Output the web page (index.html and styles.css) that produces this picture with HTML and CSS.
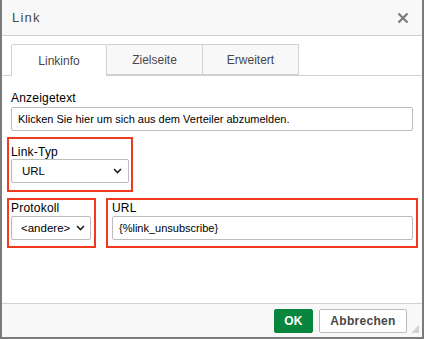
FILE: index.html
```html
<!DOCTYPE html>
<html>
<head>
<meta charset="utf-8">
<link rel="stylesheet" href="styles.css">
</head>
<body>
<div class="dlg">
  <div class="titlebar">
    <span class="title">Link</span>
    <svg class="close" width="12" height="12" viewBox="0 0 12 12"><path d="M1.5 1.5L10.5 10.5M10.5 1.5L1.5 10.5" stroke="#7a7a7a" stroke-width="2.2" stroke-linecap="butt"/></svg>
  </div>
  <div class="main">
    <div class="tabs">
      <div class="tab active">Linkinfo</div>
      <div class="tab">Zielseite</div>
      <div class="tab">Erweitert</div>
    </div>
    <div class="content">
      <div class="plain">
        <div class="lbl">Anzeigetext</div>
        <div class="input wide">Klicken Sie hier um sich aus dem Verteiler abzumelden.</div>
      </div>
      <div class="box box-typ">
        <div class="lbl">Link-Typ</div>
        <div class="select sel-typ"><span>URL</span><svg width="9" height="6" viewBox="0 0 9 6"><path d="M1 1L4.5 4.5L8 1" fill="none" stroke="#222" stroke-width="1.6"/></svg></div>
      </div>
      <div class="row">
        <div class="box box-prot">
          <div class="lbl">Protokoll</div>
          <div class="select sel-prot"><span>&lt;andere&gt;</span><svg width="9" height="6" viewBox="0 0 9 6"><path d="M1 1L4.5 4.5L8 1" fill="none" stroke="#222" stroke-width="1.6"/></svg></div>
        </div>
        <div class="box box-url">
          <div class="lbl">URL</div>
          <div class="input">{%link_unsubscribe}</div>
        </div>
      </div>
    </div>
  </div>
  <div class="footer">
    <div class="btn ok">OK</div>
    <div class="btn cancel">Abbrechen</div>
    <svg class="grip" width="8" height="8" viewBox="0 0 8 8"><path d="M8 0L8 8L0 8Z" fill="#d4d4d4"/></svg>
  </div>
</div>
</body>
</html>
```
FILE: styles.css
```css
html, body {
  margin: 0;
  padding: 0;
}
body {
  background: #7b7b7b;
  width: 424px;
  height: 339px;
  font-family: "Liberation Sans", Arial, sans-serif;
  font-size: 12px;
  color: #000;
}
.dlg {
  margin-left: 2px;
  width: 420px;
  height: 337px;
  background: #fff;
  display: flex;
  flex-direction: column;
}
.titlebar {
  height: 35px;
  background: #f8f8f8;
  border-bottom: 1px solid #d1d1d1;
  display: flex;
  align-items: center;
  justify-content: space-between;
  padding: 0 13px 0 10px;
}
.title {
  font-size: 13px;
  color: #484848;
  letter-spacing: 1.2px;
}
.close {
  display: block;
}
.main {
  flex: 1;
  padding: 8px 0 0 0;
}
.tabs {
  display: flex;
  padding-left: 9px;
  border-bottom: 1px solid #d1d1d1;
  height: 31px;
}
.tab {
  width: 96px;
  height: 31px;
  box-sizing: border-box;
  border: 1px solid #d1d1d1;
  border-left: none;
  background: #f8f8f8;
  color: #484848;
  display: flex;
  align-items: center;
  justify-content: center;
  padding-top: 1px;
}
.tab.active {
  border-left: 1px solid #d1d1d1;
  background: #fff;
  height: 32px;
  border-bottom: none;
  border-radius: 2px 2px 0 0;
}
.content {
  padding: 0 4px 0 5px;
}
.lbl {
  color: #000;
  line-height: 14px;
  height: 14px;
  letter-spacing: 0.2px;
}
.plain {
  padding: 15px 0 0 4px;
}
.plain .lbl {
  margin-bottom: 2px;
}
.input {
  height: 24px;
  box-sizing: border-box;
  border: 1px solid #bcbcbc;
  border-radius: 2px;
  padding: 0 6px;
  line-height: 22px;
  color: #000;
  white-space: nowrap;
  font-size: 11px;
}
.input.wide {
  width: 402px;
}
.box {
  border: 2px solid #ee3a1f;
  box-sizing: border-box;
}
.box-typ {
  margin-top: 6px;
  width: 126px;
  padding: 6px 2px 7px 2px;
}
.box-typ .lbl {
  margin-bottom: 0;
}
.select {
  height: 24px;
  box-sizing: border-box;
  border: 1px solid #bcbcbc;
  border-radius: 2px;
  display: flex;
  align-items: center;
  justify-content: space-between;
  color: #000;
  font-size: 11.5px;
}
.sel-typ {
  padding: 0 6px 0 10px;
}
.sel-prot {
  padding: 0 5px 0 9px;
}
.select svg {
  display: block;
}
.row {
  margin-top: 6px;
  display: flex;
  gap: 10px;
}
.box-prot {
  width: 89px;
  padding: 1px 3px 6px 2px;
}
.box-prot .lbl {
  margin-bottom: 1px;
}
.box-url {
  width: 312px;
  padding: 1px 3px 6px 4px;
}
.box-url .lbl {
  margin-bottom: 1px;
}
.footer {
  height: 33px;
  background: #f8f8f8;
  border-top: 1px solid #d1d1d1;
  display: flex;
  align-items: center;
  justify-content: flex-end;
  padding-right: 15px;
  gap: 6px;
  position: relative;
}
.btn {
  height: 24px;
  box-sizing: border-box;
  display: flex;
  align-items: center;
  justify-content: center;
  font-weight: bold;
  font-size: 12px;
  border-radius: 2px;
  letter-spacing: 0.3px;
}
.ok {
  width: 39px;
  background: #09863e;
  border: 1px solid #09863e;
  color: #fff;
}
.cancel {
  width: 88px;
  background: #fff;
  border: 1px solid #bcbcbc;
  color: #484848;
}
.grip {
  position: absolute;
  right: 3px;
  bottom: 4px;
}
```
